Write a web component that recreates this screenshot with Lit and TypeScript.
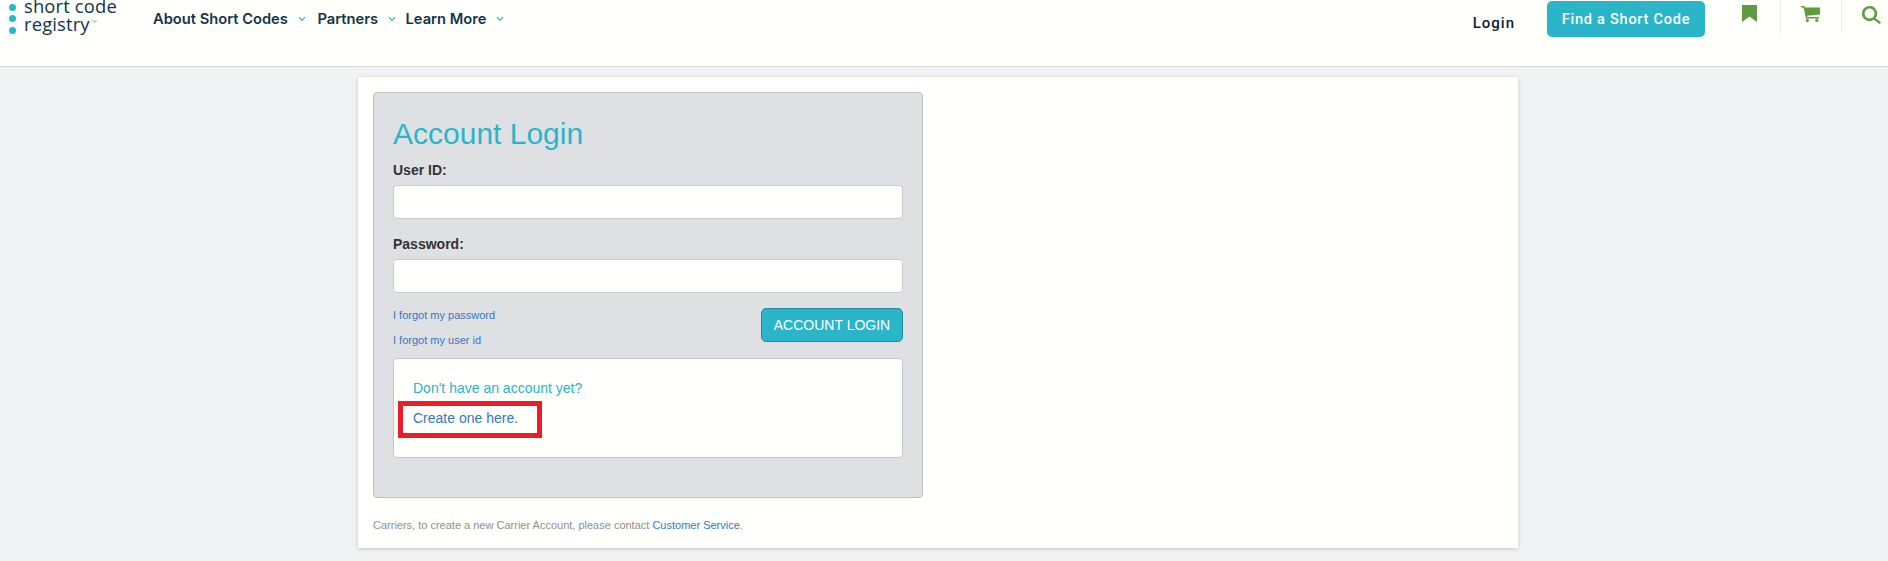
import { LitElement, html, css } from "lit";
import { customElement } from "lit/decorators.js";

@customElement("app-root")
export class AppRoot extends LitElement {
  static styles = css`
    :host { display: block; width: 1888px; height: 561px; overflow: hidden; background: #f1f2f4; font-family: "Liberation Sans", Arial, sans-serif; font-size: 14px; color: #333; }
    * { box-sizing: border-box; }
    a { text-decoration: none; color: #2f7bbf; }
    .hdr { height: 67px; background: #fffffc; border-bottom: 1px solid #d6d6d6; display: flex; align-items: flex-start; }
    .logo { display: flex; width: 153px; height: 40px; padding-left: 9px; flex: none; }
    .dots { display: flex; flex-direction: column; gap: 4.6px; margin-top: 3.6px; width: 15px; flex: none; }
    .dots i { display: block; width: 7px; height: 7px; border-radius: 50%; background: #2ab6c8; }
    .lt { margin-top: -3.5px; font-family: "Open Sans", sans-serif; font-size: 18.4px; line-height: 18px; color: #12344d; white-space: nowrap; font-weight: 400; letter-spacing: .15px; }
    .lt sup { font-size: 4px; line-height: 0; vertical-align: 8px; color: #999; margin-left: 1px; }
    .nav { display: flex; margin-top: 10px; font-family: "Inter", sans-serif; font-weight: 600; font-size: 14.7px; line-height: 18px; color: #12344d; white-space: nowrap; }
    .nav span { display: flex; align-items: center; }
    .nav svg { margin-left: 10px; width: 8px; height: 6px; flex: none; }
    .s1 { width: 164.5px; } .s2 { width: 88px; }
    .right { margin-left: auto; display: flex; align-items: flex-start; }
    .login { font-family: Roboto, sans-serif; font-weight: 500; font-size: 15px; letter-spacing: 1px; color: #12202e; margin-top: 14px; margin-right: 32px; line-height: 18px; }
    .find { width: 158px; height: 36px; margin-top: 1px; background: #2ab6c8; color: #fffffc; border-radius: 5px; font-family: Roboto, sans-serif; font-weight: 500; font-size: 14.5px; letter-spacing: .75px; display: flex; align-items: center; justify-content: center; }
    .ic { display: flex; align-items: flex-start; height: 34px; border-right: 1px solid #ececec; fill: #5f9b41; }
    .ic1 { width: 76px; padding-left: 37px; }
    .ic2 { width: 61px; padding-left: 20px; }
    .ic3 { border-right: 0; width: 46px; padding-left: 20px; }
    .ic1 svg { width: 15px; height: 17px; margin-top: 5px; }
    .ic2 svg { width: 19px; height: 16px; margin-top: 6px; }
    .ic3 svg { width: 19px; height: 18px; margin-top: 6px; }
    main { padding: 10px 0 0 358px; }
    .card { width: 1160px; height: 471px; background: #fffffc; box-shadow: 0 1px 4px rgba(0,0,0,.2); padding: 15px; }
    .panel { width: 550px; height: 406px; background: #dfe0e3; border: 1px solid #bfc0c6; border-radius: 4px; padding: 20px 19px 0; }
    h1 { margin: 0; font-weight: 400; font-size: 30px; line-height: 42px; color: #2ab6c8; }
    label { display: block; font-weight: 700; font-size: 14px; line-height: 20px; color: #333; margin-top: 5px; }
    .inp { display: block; height: 34px; width: 100%; margin-top: 5px; background: #fffffc; border: 1px solid #c9c9c9; border-radius: 4px; }
    .pw { margin-top: 15px; }
    .act { display: flex; justify-content: space-between; margin-top: 15px; height: 34px; }
    .links { display: flex; flex-direction: column; gap: 12px; font-size: 11px; line-height: 13px; padding-top: 1px; }
    .btn { width: 142px; height: 34px; background: #2ab6c8; border: 1px solid #1c8f9e; border-radius: 5px; color: #fffffc; font-size: 14px; display: flex; align-items: center; justify-content: center; }
    .box { position: relative; margin-top: 16px; height: 100px; background: #fffffc; border: 1px solid #c3c4cb; border-radius: 4px; padding: 19px 19px; font-size: 14px; line-height: 20px; }
    .q { color: #2ab6c8; }
    .c { display: block; margin-top: 10px; }
    .mark { position: absolute; left: 4px; top: 42px; width: 144px; height: 37px; border: 5px solid #ed1c2a; }
    .foot { margin: 19px 0 0; font-size: 11px; line-height: 16px; color: #8f8f8f; }
  `;
  render() {
    const ch = html`<svg viewBox="0 0 8 6"><path d="M1 1.2 4 4.4 7 1.2" fill="none" stroke="#2ab6c8" stroke-width="1.2"/></svg>`;
    return html`
      <div class="hdr">
        <div class="logo">
          <div class="dots"><i></i><i></i><i></i></div>
          <div class="lt">short code<br />registry<sup>TM</sup></div>
        </div>
        <div class="nav">
          <span class="s1">About Short Codes${ch}</span>
          <span class="s2">Partners${ch}</span>
          <span>Learn More${ch}</span>
        </div>
        <div class="right">
          <a class="login">Login</a>
          <a class="find">Find a Short Code</a>
          <div class="ic ic1"><svg viewBox="0 0 15 17"><path d="M0 0h15v17l-7.5-5.5L0 17z"/></svg></div>
          <div class="ic ic2"><svg viewBox="0 0 19 16"><path d="M0 0h3.6l.5 1.4H19v7.2L6 9.8l.3 1.3H18v1.4H5L2.6 1.4H0z"/><circle cx="6.4" cy="14.4" r="1.6"/><circle cx="15.8" cy="14.4" r="1.6"/></svg></div>
          <div class="ic ic3"><svg viewBox="0 0 19 18"><path fill-rule="evenodd" d="M7.6 0a7.6 7.6 0 0 1 6 12.2l5.4 4-1.5 1.8-5.5-4.2A7.6 7.6 0 1 1 7.6 0zm0 2.6a5 5 0 1 0 0 10 5 5 0 0 0 0-10z"/></svg></div>
        </div>
      </div>
      <main>
        <div class="card">
          <div class="panel">
            <h1>Account Login</h1>
            <label>User ID:</label>
            <div class="inp"></div>
            <label class="pw">Password:</label>
            <div class="inp"></div>
            <div class="act">
              <div class="links"><a>I forgot my password</a><a>I forgot my user id</a></div>
              <a class="btn">ACCOUNT LOGIN</a>
            </div>
            <div class="box">
              <div class="q">Don't have an account yet?</div>
              <a class="c">Create one here.</a>
              <div class="mark"></div>
            </div>
          </div>
          <p class="foot">Carriers, to create a new Carrier Account, please contact <a>Customer Service</a>.</p>
        </div>
      </main>
    `;
  }
}
